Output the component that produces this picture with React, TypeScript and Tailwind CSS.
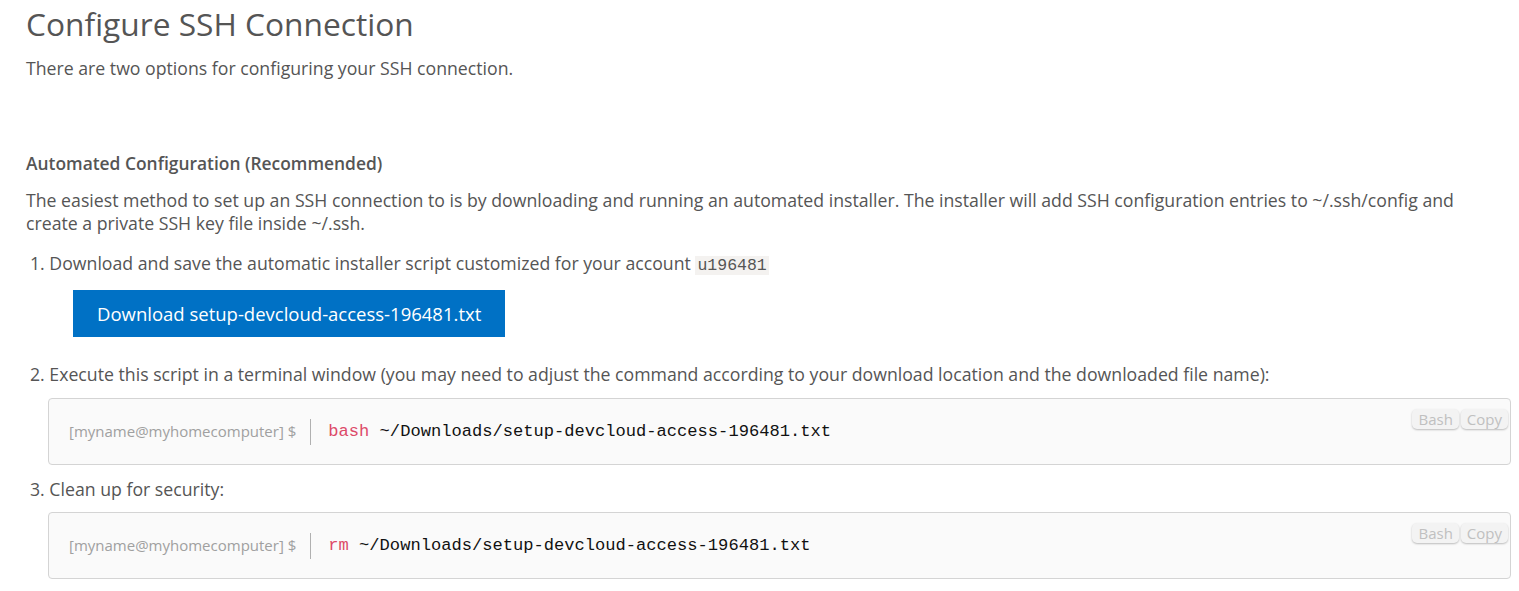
import React from "react";

const CodeBlock = ({ cmd, rest, gap }: { cmd: string; rest: string; gap: string }) => (
  <div className={`relative ml-[22px] flex h-[67px] items-center rounded-[4px] border border-[#d4d4d4] bg-[#fafafa] pl-[20px] ${gap}`}>
    <span className="pr-[14px] text-[15px] text-[#a0a0a0]">[myname@myhomecomputer] $</span>
    <span className="h-[26px] border-l border-[#b0b0b0]" />
    <span className="pl-[17px] font-['Liberation_Mono',monospace] text-[17.1px] text-[#111]">
      <span className="text-[#dd4a68]">{cmd}</span> {rest}
    </span>
    <div className="absolute right-[2px] top-[10px] flex gap-[2px]">
      <span className="rounded-[5px] bg-[#f3f3f3] px-[6px] text-[15px] leading-[20px] text-[#c0c0c0] shadow-[0_1px_2px_rgba(0,0,0,0.25)]">
        Bash
      </span>
      <span className="rounded-[5px] bg-[#f3f3f3] px-[6px] text-[15px] leading-[20px] text-[#c0c0c0] shadow-[0_1px_2px_rgba(0,0,0,0.25)]">
        Copy
      </span>
    </div>
  </div>
);

export default function App() {
  return (
    <div className="min-h-screen bg-white pl-[26px] pr-[8px] font-['Open_Sans',sans-serif] text-[#555]">
      <h1 className="pt-[3px] text-[31.7px] leading-[42px]">Configure SSH Connection</h1>
      <p className="mt-[12px] text-[17.7px] leading-[23px]">There are two options for configuring your SSH connection.</p>

      <h3 className="mt-[72px] text-[17.4px] font-semibold leading-[23px]">Automated Configuration (Recommended)</h3>
      <p className="mt-[14px] mr-[24px] text-[17.7px] leading-[23px]">
        The easiest method to set up an SSH connection to is by downloading and running an automated installer. The
        installer will add SSH configuration entries to ~/.ssh/config and create a private SSH key file inside ~/.ssh.
      </p>

      <ol className="mt-[17px] text-[17.7px] leading-[23px]">
        <li>
          <div className="pl-[4px]">
            1. Download and save the automatic installer script customized for your account{" "}
            <code className="bg-[#f4f2f0] px-[2px] font-['Liberation_Mono',monospace] text-[16.5px]">u196481</code>
          </div>
          <button className="mt-[13px] ml-[47px] h-[47px] bg-[#0071c5] px-[24px] text-[18.5px] text-white">
            Download setup-devcloud-access-196481.txt
          </button>
        </li>
        <li className="mt-[26px]">
          <div className="pl-[4px]">
            2. Execute this script in a terminal window (you may need to adjust the command according to your download
            location and the downloaded file name):
          </div>
          <CodeBlock gap="mt-[12px]" cmd="bash" rest="~/Downloads/setup-devcloud-access-196481.txt" />
        </li>
        <li className="mt-[13px]">
          <div className="pl-[4px]">3. Clean up for security:</div>
          <CodeBlock gap="mt-[11px]" cmd="rm" rest="~/Downloads/setup-devcloud-access-196481.txt" />
        </li>
      </ol>
    </div>
  );
}
